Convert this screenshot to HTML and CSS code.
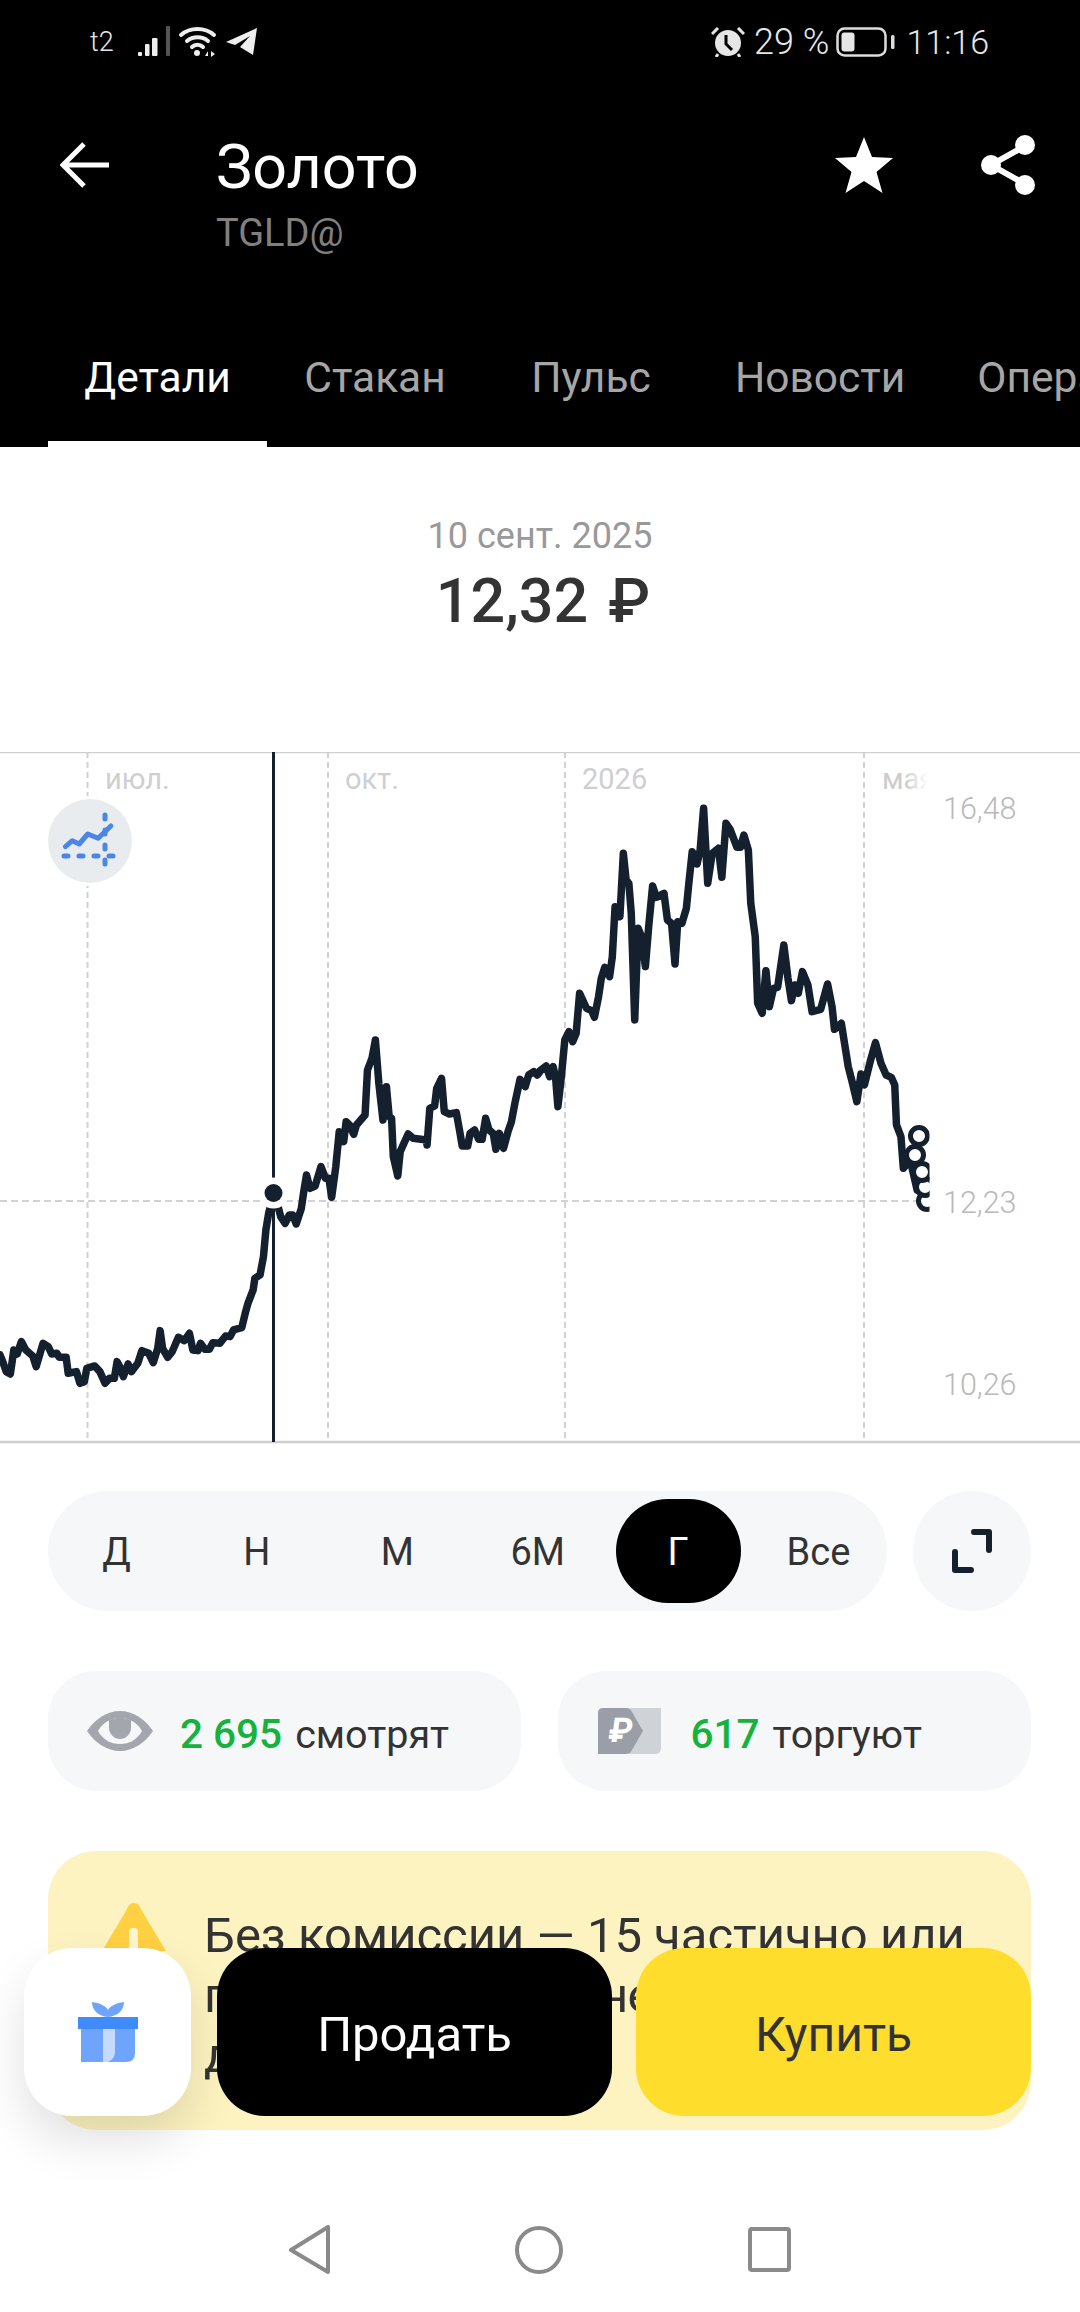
FILE: index.html
```html
<!DOCTYPE html>
<html lang="ru">
<head>
    <meta charset="UTF-8">
    <meta name="viewport" content="width=device-width, initial-scale=1.0">
    <title>Золото</title>
    <link rel="stylesheet" href="styles.css">
</head>
<body>
<div class="screen">

    <!-- Black header -->
    <header class="top">
        <div class="status">
            <div class="status-left">
                <span class="carrier">t2</span>
                <svg class="signal" width="32" height="32" viewBox="0 0 32 32">
                    <rect x="0" y="26" width="4" height="4" rx="1" fill="#eee"/>
                    <rect x="7" y="18" width="4.500" height="12" rx="1" fill="#eee"/>
                    <rect x="14" y="12" width="5.500" height="18" rx="1" fill="#eee"/>
                    <rect x="28" y="0" width="4" height="30" rx="1" fill="#555"/>
                </svg>
                <svg class="wifi" width="40" height="32" viewBox="0 0 40 32" fill="none" stroke="#eee" stroke-width="4" stroke-linecap="round">
                    <path d="M3 9C12 1 27 1 36 9"/>
                    <path d="M9 15C15 10 24 10 30 15"/>
                    <path d="M14 21C17 18 22 18 25 21"/>
                    <circle cx="19" cy="27" r="3" fill="#eee" stroke="none"/>
                    <path d="M27 30l3-5v5zM33 25l4 3-4 3z" fill="#eee" stroke="none"/>
                </svg>
                <svg class="plane" width="32" height="28" viewBox="0 0 32 28">
                    <path d="M31 0 27 27 14 19 24 8 9 17 0 14Z" fill="#eee"/>
                </svg>
            </div>
            <div class="status-right">
                <svg class="alarm" width="34" height="30" viewBox="0 0 34 30">
                    <circle cx="17" cy="16" r="13" fill="#e6e6e6"/>
                    <path d="M15 8v9l6 6" fill="none" stroke="#000" stroke-width="3"/>
                    <path d="M1 7 7 1M33 7 27 1M7 27l-2 3M27 27l2 3" stroke="#e6e6e6" stroke-width="3"/>
                </svg>
                <span class="battery-text">29 %</span>
                <svg class="battery" width="59" height="30" viewBox="0 0 59 30">
                    <rect x="1.500" y="1.500" width="48" height="27" rx="7" fill="none" stroke="#ddd" stroke-width="2.500"/>
                    <rect x="5.500" y="5.500" width="13" height="19" rx="3" fill="#e6e6e6"/>
                    <rect x="55" y="8" width="3.500" height="14" rx="1.500" fill="#ddd"/>
                </svg>
                <span class="clock">11:16</span>
            </div>
        </div>

        <div class="title-row">
            <svg class="back" width="49" height="46" viewBox="0 0 49 46" fill="none" stroke="#fff" stroke-width="5">
                <path d="M49 23H4M24 2 3 23l21 21"/>
            </svg>
            <div class="title-block">
                <h1>Золото</h1>
                <p>TGLD@</p>
            </div>
            <div class="title-actions">
                <svg class="star" width="58" height="56" viewBox="0 0 58 56">
                    <path d="M29 0 37 20 58 21 41.500 35 47.500 56 29 44 10.500 56 16.500 35 0 21 21 20Z" fill="#fff"/>
                </svg>
                <svg class="share" width="54" height="60" viewBox="0 0 54 60" fill="#fff" stroke="#fff" stroke-width="6">
                    <path d="M44 11 10 30 44 49" fill="none"/>
                    <circle cx="44" cy="10" r="7"/>
                    <circle cx="10" cy="30" r="7"/>
                    <circle cx="44" cy="50" r="7"/>
                </svg>
            </div>
        </div>

        <nav class="tabs">
            <a class="tab active">Детали</a>
            <a class="tab">Стакан</a>
            <a class="tab">Пульс</a>
            <a class="tab">Новости</a>
            <a class="tab">Операции</a>
        </nav>
    </header>

    <!-- Selected point -->
    <section class="quote">
        <div class="quote-date">10 сент. 2025</div>
        <div class="quote-price">12,32 ₽</div>
    </section>

    <!-- Chart, drawn in page coordinates -->
    <section class="chart">
        <svg width="1080" height="692" viewBox="0 752 1080 692">
            <defs>
                <linearGradient id="fade" x1="882" x2="928" y1="0" y2="0" gradientUnits="userSpaceOnUse">
                    <stop offset="0.500" stop-color="#ccc"/>
                    <stop offset="1" stop-color="#fff"/>
                </linearGradient>
                <clipPath id="plot">
                    <rect x="0" y="752" width="929.500" height="692"/>
                </clipPath>
            </defs>

            <path class="grid" d="M87.500 752V1442M328 752V1442M565 752V1442M864 752V1442"/>
            <path class="grid-h" d="M0 1201H917"/>
            <path class="frame" d="M0 752H1080M0 1442H1080"/>

            <text class="axis-x" x="105" y="789">июл.</text>
            <text class="axis-x" x="345" y="789">окт.</text>
            <text class="axis-x" x="582" y="789">2026</text>
            <text class="axis-x" x="882" y="789" style="fill:url(#fade)">мая</text>

            <text class="axis-y" x="943" y="819">16,48</text>
            <text class="axis-y" x="943" y="1213">12,23</text>
            <text class="axis-y" x="943" y="1395">10,26</text>

            <path class="cursor" d="M273.500 752V1442"/>

            <g clip-path="url(#plot)">
                <g transform="translate(0 1000) scale(.3444 .3333)">
                    <path class="line" d="M0 1065 8 1085 18 1115 30 1122 36 1080 40 1050 50 1062 62 1025 75 1050 95 1068 105 1100 125 1030 140 1040 150 1062 165 1060 172 1072 192 1072 198 1120 222 1115 232 1150 245 1145 252 1105 275 1098 290 1115 305 1150 318 1135 332 1135 340 1085 350 1105 358 1130 372 1092 382 1115 400 1090 412 1052 432 1060 445 1088 458 1045 465 992 472 1045 487 1072 500 1055 518 1012 535 1022 550 1000 560 1050 575 1052 582 1030 595 1048 608 1048 618 1028 638 1030 655 1008 668 1010 678 990 702 983 712 940 720 910 735 870 740 835 755 825 765 770 772 690 780 640 785 620 808 622 815 650 828 670 840 645 850 645 860 672 875 625 882 575 890 525 900 565 915 558 932 500 945 535 955 535 963 592 975 500 985 395 998 425 1005 365 1015 375 1027 403 1035 375 1060 345 1067 210 1080 175 1090 120 1100 250 1112 360 1122 260 1130 350 1137 355 1142 470 1155 528 1162 455 1185 402 1200 415 1238 420 1240 435 1248 325 1262 318 1268 265 1282 235 1290 335 1305 342 1325 338 1335 395 1342 438 1358 438 1365 400 1378 390 1390 418 1400 418 1410 355 1420 390 1432 400 1440 448 1450 400 1462 445 1475 395 1485 365 1495 310 1510 238 1525 260 1535 225 1550 215 1560 225 1568 215"/>
                </g>
                <g transform="translate(540 740) scale(.3444 .3333)">
                    <path class="line" d="M0 992 18 978 28 1010 38 980 45 1010 52 1100 62 1010 72 900 84 875 95 905 105 880 115 760 135 805 150 812 158 832 170 770 178 715 188 682 202 710 210 650 218 500 232 530 242 340 250 420 258 430 265 520 275 840 285 565 295 590 306 680 316 555 327 438 338 472 360 460 370 540 382 550 392 672 400 545 412 550 425 505 432 432 442 335 456 372 465 330 475 205 487 430 500 340 518 325 528 412 540 250 552 268 572 322 582 322 592 285 605 330 612 490 625 590 632 790 645 820 656 692 666 800 678 745 690 742 708 615 720 715 730 782 740 735 750 760 762 695 778 735 790 815 815 808 835 732 848 800 855 868 875 850 885 915 895 980 905 1020 920 1085 932 1002 942 1035 960 960 974 908 990 970 1005 1005 1020 1012 1030 1035 1035 1155 1048 1190 1055 1285 1075 1260 1095 1350"/>
                </g>
                <circle class="tick" cx="927" cy="1201" r="8.500"/>
                <circle class="tick" cx="925" cy="1187" r="8.500"/>
                <circle class="tick" cx="922" cy="1172" r="8.500"/>
                <circle class="tick" cx="915" cy="1155" r="8.500"/>
                <circle class="tick" cx="919" cy="1136" r="8.500"/>
            </g>

            <circle cx="273.500" cy="1193" r="15.500" fill="#fff"/>
            <circle cx="273.500" cy="1193" r="9" fill="#14202e"/>

            <circle cx="90" cy="841" r="45" fill="#fff"/>
            <circle cx="90" cy="841" r="42" fill="#e9ecee"/>
            <path class="trend" d="M65.400 846.700 72.300 840.700 79.200 844 87.800 834 98.100 838.300 110.900 826"/>
            <path class="trend-dash" d="M64 856H116M105 815V867"/>
        </svg>
    </section>

    <!-- Period switch -->
    <section class="periods">
        <div class="period-group">
            <span class="period">Д</span>
            <span class="period">Н</span>
            <span class="period">М</span>
            <span class="period">6М</span>
            <span class="period active">Г</span>
            <span class="period">Все</span>
        </div>
        <div class="expand">
            <svg width="42" height="44" viewBox="0 0 42 44" fill="none" stroke="#14202e" stroke-width="6" stroke-linecap="round" stroke-linejoin="round">
                <path d="M23 3H38V21"/>
                <path d="M4 23V41H20"/>
            </svg>
        </div>
    </section>

    <!-- Watching and trading -->
    <section class="stats">
        <div class="stat">
            <svg class="stat-icon" width="66" height="40" viewBox="0 0 66 40">
                <path d="M0 20C8 8 20 0 33 0S58 8 66 20C58 32 46 40 33 40S8 32 0 20Z" fill="#a3a7ad"/>
                <path d="M11 20C16 11 24 7 33 7S50 11 55 20C50 29 42 33 33 33S16 29 11 20Z" fill="#f6f7f8"/>
                <path d="M22 9C25 7.500 29 7 33 7S41 7.500 44 9V17C44 23 39 28 33 28S22 23 22 17Z" fill="#a3a7ad"/>
            </svg>
            <span class="stat-count">2 695</span>
            <span class="stat-label">смотрят</span>
        </div>
        <div class="stat stat-trade">
            <svg class="stat-icon" width="63" height="46" viewBox="0 0 63 46">
                <path d="M30 0H63V40Q63 46 57 46H30Z" fill="#cfd2d6"/>
                <path d="M5 0H28Q32 0 34 4L45 23 34 42Q32 46 28 46H0V5Q0 0 5 0Z" fill="#9a9fa7"/>
                <text class="rub-glyph" x="9" y="34" transform="skewX(-8) translate(5 0)">₽</text>
            </svg>
            <span class="stat-count">617</span>
            <span class="stat-label">торгуют</span>
        </div>
    </section>

    <!-- Commission notice, mostly under the buttons -->
    <section class="banner">
        <svg class="warn" width="64" height="48" viewBox="0 0 64 48">
            <path d="M32 0C36 0 38 3 40 8L64 48H0L24 8C26 3 28 0 32 0Z" fill="#ffd042"/>
            <rect x="27" y="25" width="9" height="23" rx="4" fill="#fff6d0"/>
        </svg>
        <p>Без комиссии — 15 частично или<br><span class="tight">полностью исполненных заявок</span><br>до конца месяца</p>
    </section>

    <!-- Floating buttons -->
    <div class="actions">
        <div class="gift">
            <svg width="60" height="60" viewBox="0 0 60 60">
                <path d="M30 15C20 14 14 8 14 0 22 1 28 4 30 8 32 4 38 1 46 0 46 8 40 14 30 15Z" fill="#6ea4fb"/>
                <path d="M3 27H57V51Q57 60 48 60H3Z" fill="#6ea4fb"/>
                <path d="M25 27H37V50Q37 57 30 60H25Z" fill="#c5dafc"/>
                <rect x="0" y="15" width="60" height="12" fill="#3f8bfb"/>
            </svg>
        </div>
        <a class="btn btn-sell">Продать</a>
        <a class="btn btn-buy">Купить</a>
    </div>

    <!-- System navigation -->
    <nav class="sysnav">
        <svg width="41" height="49" viewBox="0 0 41 49" fill="none" stroke="#8a8a8a" stroke-width="4" stroke-linejoin="round">
            <path d="M39 2V47L2 25Z"/>
        </svg>
        <svg width="48" height="48" viewBox="0 0 48 48" fill="none" stroke="#8a8a8a" stroke-width="4">
            <circle cx="24" cy="24" r="22"/>
        </svg>
        <svg width="43" height="45" viewBox="0 0 43 45" fill="none" stroke="#8a8a8a" stroke-width="4" stroke-linejoin="round">
            <rect x="2" y="2" width="39" height="41" rx="2"/>
        </svg>
    </nav>

</div>
</body>
</html>
```

FILE: styles.css
```css
* {
    margin: 0;
    padding: 0;
    box-sizing: border-box;
}
body {
    background: #fff;
    font-family: Roboto, "Noto Sans", sans-serif;
    color: #333;
}
.screen {
    position: relative;
    width: 1080px;
    height: 2312px;
    overflow: hidden;
    background: #fff;
}

/* Header */
.top {
    height: 447px;
    background: #000;
    color: #fff;
    display: flex;
    flex-direction: column;
}
.status {
    height: 84px;
    display: flex;
    justify-content: space-between;
    align-items: center;
    padding: 0 91px 0 90px;
    color: #e6e6e6;
    font-weight: 300;
}
.status-left,
.status-right {
    display: flex;
    align-items: center;
}
.carrier {
    font-size: 27px;
    width: 48px;
}
.signal {
    margin-right: 8px;
}
.wifi {
    margin-right: 8px;
}
.alarm {
    margin-right: 9px;
}
.battery-text {
    font-size: 36px;
}
.clock {
    font-size: 34px;
}
.battery {
    margin: 0 11px 0 7px;
}
.title-row {
    display: flex;
    align-items: flex-start;
    padding: 53px 45px 0 60px;
}
.back {
    margin-top: 5px;
    margin-right: 107px;
}
.title-block h1 {
    font-size: 61px;
    font-weight: 400;
    line-height: 60px;
}
.title-block p {
    font-size: 38px;
    line-height: 44px;
    margin-top: 14px;
    color: #808080;
}
.title-actions {
    margin-left: auto;
    display: flex;
    align-items: flex-start;
    gap: 88px;
}
.share {
    margin-top: -2px;
}
.tabs {
    margin-top: auto;
    padding-left: 48px;
    display: flex;
    white-space: nowrap;
}
.tab {
    flex: 0 0 auto;
    min-width: 216px;
    padding: 0 36px 39px;
    font-size: 42.500px;
    line-height: 48px;
    text-align: center;
    color: #a6a6a6;
    border-bottom: 6px solid transparent;
}
.tab.active {
    min-width: 219px;
    color: #fff;
    border-bottom-color: #fff;
}

/* Quote */
.quote {
    height: 305px;
    display: flex;
    flex-direction: column;
    align-items: center;
    padding-top: 67px;
}
.quote-date {
    font-size: 36px;
    line-height: 44px;
    color: #999;
}
.quote-price {
    font-size: 61px;
    line-height: 70px;
    margin-top: 8px;
    padding-left: 6px;
    font-weight: 500;
    word-spacing: 5px;
    color: #333;
}

/* Chart */
.chart {
    height: 692px;
}
.chart svg {
    display: block;
}
.grid {
    stroke: #d2d2d2;
    stroke-width: 2;
    stroke-dasharray: 6 4;
    fill: none;
}
.grid-h {
    stroke: #d2d2d2;
    stroke-width: 2;
    stroke-dasharray: 7 4;
    fill: none;
}
.frame {
    stroke: #cfcfcf;
    stroke-width: 2.500;
    fill: none;
}
.axis-x {
    font-size: 29px;
    fill: #cfcfd2;
}
.axis-y {
    font-size: 30.500px;
    font-weight: 300;
    fill: #b9b9b9;
}
.cursor {
    stroke: #14202e;
    stroke-width: 3;
}
.line {
    fill: none;
    stroke: #14202e;
    stroke-width: 7.500;
    stroke-linejoin: round;
    stroke-linecap: round;
    vector-effect: non-scaling-stroke;
}
.tick {
    fill: #fff;
    stroke: #14202e;
    stroke-width: 5;
}
.trend {
    fill: none;
    stroke: #4a86e8;
    stroke-width: 5;
    stroke-linecap: round;
    stroke-linejoin: round;
}
.trend-dash {
    fill: none;
    stroke: #4a86e8;
    stroke-width: 5;
    stroke-linecap: round;
    stroke-dasharray: 4 11;
}

/* Periods */
.periods {
    display: flex;
    gap: 26px;
    padding: 47px 49px 0 48px;
}
.period-group {
    flex: 1;
    height: 120px;
    padding: 8px 6px;
    border-radius: 60px;
    background: #f6f7f8;
    display: flex;
    justify-content: space-between;
}
.period {
    width: 125px;
    height: 104px;
    padding-top: 2px;
    border-radius: 52px;
    display: flex;
    align-items: center;
    justify-content: center;
    font-size: 38px;
    color: #333;
}
.period.active {
    background: #000;
    color: #fff;
}
.expand {
    width: 118px;
    height: 120px;
    border-radius: 60px;
    background: #f6f7f8;
    display: flex;
    align-items: center;
    justify-content: center;
}

/* Stats */
.stats {
    display: flex;
    gap: 37px;
    padding: 60px 49px 0 48px;
}
.stat {
    flex: 1;
    height: 120px;
    border-radius: 48px;
    background: #f6f7f8;
    display: flex;
    align-items: center;
    padding-left: 39px;
    font-size: 39.500px;
}
.stat-trade {
    padding-left: 40px;
}
.stat-icon {
    margin-right: 27px;
    flex: none;
}
.stat-trade .stat-icon {
    margin-right: 30px;
}
.stat-count,
.stat-label {
    padding-top: 6px;
}
.stat-count {
    color: #15b23c;
    font-size: 40.500px;
    font-weight: 500;
    margin-right: 13px;
}
.stat-label {
    color: #333;
}
.rub-glyph {
    font-size: 34px;
    font-weight: 700;
    fill: #fff;
}

/* Banner */
.banner {
    height: 279px;
    margin: 60px 49px 0 48px;
    padding: 52px 40px 0 54px;
    border-radius: 48px;
    background: #fdf3c0;
    display: flex;
    align-items: flex-start;
    gap: 38px;
    overflow: hidden;
}
.warn {
    flex: none;
}
.banner p {
    margin-top: 3px;
    font-size: 49px;
    line-height: 60px;
    color: #333;
    white-space: nowrap;
}
.tight {
    letter-spacing: -0.700px;
}

/* Floating buttons */
.actions {
    position: absolute;
    left: 24px;
    right: 49px;
    top: 1948px;
    height: 168px;
    display: flex;
    gap: 24px;
}
.gift {
    flex: none;
    width: 167px;
    margin-right: 2px;
    border-radius: 48px;
    background: #fff;
    box-shadow: 0 24px 48px rgba(0, 0, 0, 0.12);
    display: flex;
    align-items: center;
    justify-content: center;
}
.btn {
    flex: 1;
    border-radius: 48px;
    display: flex;
    align-items: center;
    justify-content: center;
    padding-top: 4px;
    font-size: 49px;
}
.btn-sell {
    background: #000;
    color: #fff;
}
.btn-buy {
    background: #ffdd2d;
    color: #333;
    font-size: 48px;
}

/* System nav */
.sysnav {
    margin-top: 95px;
    display: flex;
    align-items: center;
    justify-content: center;
    gap: 185px;
}
```
